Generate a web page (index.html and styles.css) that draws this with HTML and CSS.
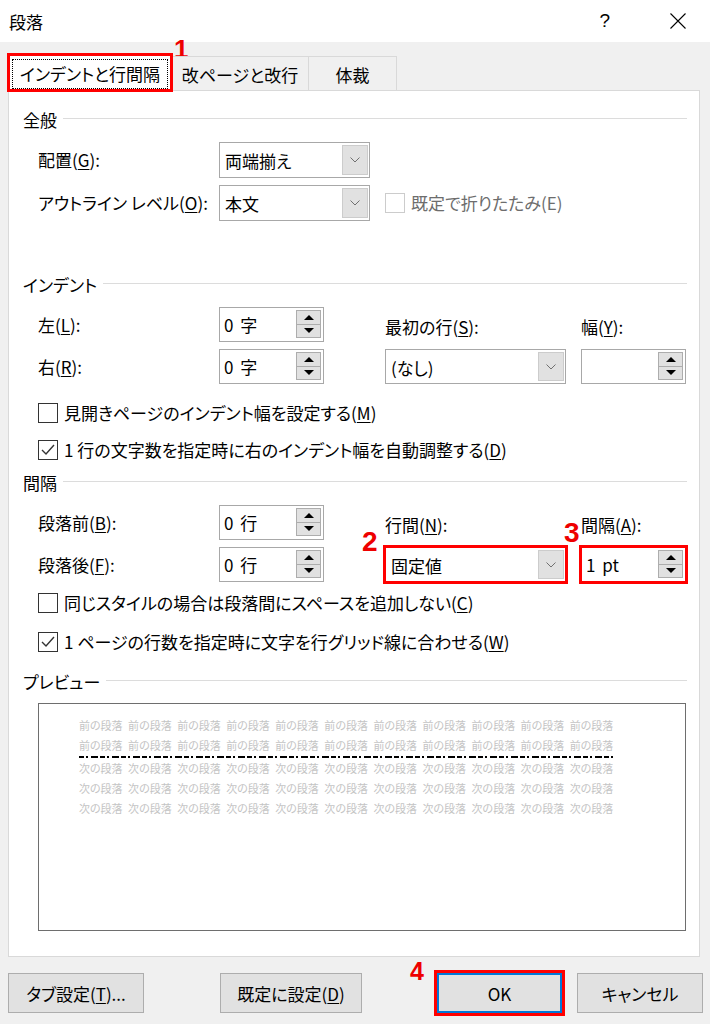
FILE: index.html
```html
<!DOCTYPE html>
<html lang="ja">
<head>
    <meta charset="UTF-8">
    <title>段落</title>
    <link rel="stylesheet" href="styles.css">
</head>
<body>
<div class="dialog">

    <div class="titlebar">
        <span class="title">段落</span>
        <span class="help">?</span>
        <svg class="close" width="16" height="16" viewBox="0 0 16 16">
            <path d="M0.5 0.5 L15.5 15.5 M15.5 0.5 L0.5 15.5" stroke="#000" stroke-width="1.1" fill="none"/>
        </svg>
    </div>

    <div class="tabs">
        <div class="tab tab-indent active">
            <span class="focus">インデントと行間隔</span>
            <span class="redbox"></span>
        </div>
        <div class="tab tab-page">改ページと改行</div>
        <div class="tab tab-style">体裁</div>
    </div>

    <div class="panel">

        <h3 class="group-title first">全般</h3>
        <div class="form-grid general">
            <span class="label c1">配置(<u>G</u>):</span>
            <div class="select narrow">
                <span class="value">両端揃え</span>
                <span class="drop"><svg width="10" height="6" viewBox="0 0 10 6"><path d="M0.5 0.5 L5 5 L9.5 0.5" stroke="#707070" fill="none"/></svg></span>
            </div>
            <span class="label c1">アウトライン レベル(<u>O</u>):</span>
            <div class="select narrow">
                <span class="value">本文</span>
                <span class="drop"><svg width="10" height="6" viewBox="0 0 10 6"><path d="M0.5 0.5 L5 5 L9.5 0.5" stroke="#707070" fill="none"/></svg></span>
            </div>
            <div class="check disabled c3">
                <span class="box"></span>
                <span>既定で折りたたみ(E)</span>
            </div>
        </div>

        <h3 class="group-title indent-title">インデント</h3>
        <div class="form-grid">
            <span class="label c1">左(<u>L</u>):</span>
            <div class="spin">
                <span class="value">0 字</span>
                <span class="spin-btns">
                    <span class="arrow"><svg width="10" height="5" viewBox="0 0 10 5"><path d="M0 5 L5 0 L10 5 Z" fill="#000"/></svg></span>
                    <span class="arrow"><svg width="10" height="5" viewBox="0 0 10 5"><path d="M0 0 L10 0 L5 5 Z" fill="#000"/></svg></span>
                </span>
            </div>
            <span class="label c3 low">最初の行(<u>S</u>):</span>
            <span class="label c5 low">幅(<u>Y</u>):</span>

            <span class="label c1">右(<u>R</u>):</span>
            <div class="spin">
                <span class="value">0 字</span>
                <span class="spin-btns">
                    <span class="arrow"><svg width="10" height="5" viewBox="0 0 10 5"><path d="M0 5 L5 0 L10 5 Z" fill="#000"/></svg></span>
                    <span class="arrow"><svg width="10" height="5" viewBox="0 0 10 5"><path d="M0 0 L10 0 L5 5 Z" fill="#000"/></svg></span>
                </span>
            </div>
            <div class="select wide c3">
                <span class="value">(なし)</span>
                <span class="drop"><svg width="10" height="6" viewBox="0 0 10 6"><path d="M0.5 0.5 L5 5 L9.5 0.5" stroke="#707070" fill="none"/></svg></span>
            </div>
            <div class="spin c5">
                <span class="value"></span>
                <span class="spin-btns">
                    <span class="arrow"><svg width="10" height="5" viewBox="0 0 10 5"><path d="M0 5 L5 0 L10 5 Z" fill="#000"/></svg></span>
                    <span class="arrow"><svg width="10" height="5" viewBox="0 0 10 5"><path d="M0 0 L10 0 L5 5 Z" fill="#000"/></svg></span>
                </span>
            </div>
        </div>

        <div class="checks indent-checks">
            <div class="check">
                <span class="box"></span>
                <span>見開きページのインデント幅を設定する(<u>M</u>)</span>
            </div>
            <div class="check">
                <span class="box"><svg width="18" height="18" viewBox="0 0 18 18"><path d="M3 9 L7 13 L15 4" stroke="#333" stroke-width="1.4" fill="none"/></svg></span>
                <span>1 行の文字数を指定時に右のインデント幅を自動調整する(<u>D</u>)</span>
            </div>
        </div>

        <h3 class="group-title space-title">間隔</h3>
        <div class="form-grid">
            <span class="label c1">段落前(<u>B</u>):</span>
            <div class="spin">
                <span class="value">0 行</span>
                <span class="spin-btns">
                    <span class="arrow"><svg width="10" height="5" viewBox="0 0 10 5"><path d="M0 5 L5 0 L10 5 Z" fill="#000"/></svg></span>
                    <span class="arrow"><svg width="10" height="5" viewBox="0 0 10 5"><path d="M0 0 L10 0 L5 5 Z" fill="#000"/></svg></span>
                </span>
            </div>
            <span class="label c3 low">行間(<u>N</u>):</span>
            <span class="label c5 low">間隔(<u>A</u>):</span>

            <span class="label c1">段落後(<u>F</u>):</span>
            <div class="spin">
                <span class="value">0 行</span>
                <span class="spin-btns">
                    <span class="arrow"><svg width="10" height="5" viewBox="0 0 10 5"><path d="M0 5 L5 0 L10 5 Z" fill="#000"/></svg></span>
                    <span class="arrow"><svg width="10" height="5" viewBox="0 0 10 5"><path d="M0 0 L10 0 L5 5 Z" fill="#000"/></svg></span>
                </span>
            </div>
            <div class="select wide c3 hl">
                <span class="value">固定値</span>
                <span class="drop"><svg width="10" height="6" viewBox="0 0 10 6"><path d="M0.5 0.5 L5 5 L9.5 0.5" stroke="#707070" fill="none"/></svg></span>
            </div>
            <div class="spin c5 hl">
                <span class="value">1 pt</span>
                <span class="spin-btns">
                    <span class="arrow"><svg width="10" height="5" viewBox="0 0 10 5"><path d="M0 5 L5 0 L10 5 Z" fill="#000"/></svg></span>
                    <span class="arrow"><svg width="10" height="5" viewBox="0 0 10 5"><path d="M0 0 L10 0 L5 5 Z" fill="#000"/></svg></span>
                </span>
            </div>
        </div>

        <div class="checks space-checks">
            <div class="check">
                <span class="box"></span>
                <span>同じスタイルの場合は段落間にスペースを追加しない(<u>C</u>)</span>
            </div>
            <div class="check">
                <span class="box"><svg width="18" height="18" viewBox="0 0 18 18"><path d="M3 9 L7 13 L15 4" stroke="#333" stroke-width="1.4" fill="none"/></svg></span>
                <span>1 ページの行数を指定時に文字を行グリッド線に合わせる(<u>W</u>)</span>
            </div>
        </div>

        <h3 class="group-title preview-title">プレビュー</h3>
        <div class="preview">
            <p class="pv">前の段落 前の段落 前の段落 前の段落 前の段落 前の段落 前の段落 前の段落 前の段落 前の段落 前の段落</p>
            <p class="pv">前の段落 前の段落 前の段落 前の段落 前の段落 前の段落 前の段落 前の段落 前の段落 前の段落 前の段落</p>
            <div class="squash"></div>
            <p class="pv">次の段落 次の段落 次の段落 次の段落 次の段落 次の段落 次の段落 次の段落 次の段落 次の段落 次の段落</p>
            <p class="pv">次の段落 次の段落 次の段落 次の段落 次の段落 次の段落 次の段落 次の段落 次の段落 次の段落 次の段落</p>
            <p class="pv">次の段落 次の段落 次の段落 次の段落 次の段落 次の段落 次の段落 次の段落 次の段落 次の段落 次の段落</p>
        </div>
    </div>

    <div class="actions">
        <button class="btn btn-tabs">タブ設定(<u>T</u>)...</button>
        <button class="btn btn-default">既定に設定(<u>D</u>)</button>
        <button class="btn btn-ok">OK</button>
        <button class="btn btn-cancel">キャンセル</button>
    </div>

    <span class="num n1">1</span>
    <span class="num n2">2</span>
    <span class="num n3">3</span>
    <span class="num n4">4</span>
</div>
</body>
</html>
```

FILE: styles.css
```css
body {
    margin: 0;
    background-color: #f0f0f0;
    font-family: "Noto Sans CJK JP", "Noto Sans", sans-serif;
    font-feature-settings: "palt";
    color: #000;
}

.dialog {
    position: relative;
    width: 710px;
    height: 1024px;
    overflow: hidden;
    background-color: #f0f0f0;
}

/* title bar */
.titlebar {
    height: 42px;
    background-color: #fff;
    display: flex;
    align-items: center;
    padding-left: 9px;
    font-size: 17px;
}

.help {
    margin-left: auto;
    font-family: "Liberation Sans", sans-serif;
    font-size: 19px;
}

.close {
    margin: 0 24px 0 60px;
}

/* tabs */
.tabs {
    display: flex;
    align-items: flex-end;
    height: 34px;
    margin-top: 14px;
    padding-left: 8px;
    position: relative;
    z-index: 1;
}

.tab {
    box-sizing: border-box;
    height: 34px;
    border: 1px solid #d9d9d9;
    border-bottom: none;
    background-color: #f0f0f0;
    display: flex;
    align-items: center;
    justify-content: center;
    font-size: 17px;
}

.tab + .tab {
    margin-left: -1px;
}

.tab-indent {
    width: 164px;
}

.tab-page {
    width: 138px;
    padding-top: 2px;
}

.tab-style {
    width: 89px;
    padding-top: 2px;
}

.tab.active {
    position: relative;
    height: 36px;
    margin-bottom: -1px;
    background-color: #fff;
}

.focus {
    box-sizing: border-box;
    width: 156px;
    height: 30px;
    border: 1px dotted #000;
    display: flex;
    align-items: center;
    justify-content: center;
}

.redbox {
    position: absolute;
    left: -2px;
    top: -3px;
    right: -2px;
    bottom: -1px;
    border: 3px solid #f00;
}

/* panel */
.panel {
    box-sizing: border-box;
    width: 692px;
    height: 867px;
    margin-left: 8px;
    padding: 0 12px 0 14px;
    border: 1px solid #d9d9d9;
    background-color: #fff;
}

.group-title {
    display: flex;
    align-items: center;
    margin: 0;
    font-size: 17px;
    font-weight: normal;
    line-height: 24px;
}

.group-title::after {
    content: "";
    flex: 1;
    height: 1px;
    margin: 0 0 4px 6px;
    background-color: #dcdcdc;
}

.group-title.first {
    margin-top: 17px;
}

.indent-title {
    margin-top: 52px;
}

.space-title {
    margin-top: 9px;
}

.preview-title {
    margin-top: 16px;
}

.form-grid {
    display: grid;
    grid-template-columns: 181px 166px 181px 15px 106px;
    grid-template-rows: 35px 35px;
    row-gap: 7px;
    align-items: center;
    margin: 10px 0 0 15px;
    font-size: 17px;
}

.form-grid.general {
    grid-template-rows: 36px 36px;
}

.c1 {
    grid-column: 1;
}

.c3 {
    grid-column: 3;
}

.c5 {
    grid-column: 5;
}

.label {
    line-height: 24px;
    white-space: nowrap;
}

.label.low {
    padding-top: 5px;
}

u {
    text-underline-offset: 2px;
}

/* dropdowns */
.select {
    box-sizing: border-box;
    height: 100%;
    display: flex;
    align-items: center;
    padding-left: 5px;
    border: 1px solid #a8a8a8;
    background-color: #fff;
}

.select.narrow {
    width: 151px;
}

.select.wide {
    width: 181px;
}

.select .value {
    line-height: 24px;
    padding-top: 2px;
}

.drop {
    box-sizing: border-box;
    width: 26px;
    height: calc(100% - 4px);
    margin: 0 1px 0 auto;
    display: flex;
    align-items: center;
    justify-content: center;
    background-color: #e1e1e1;
    border: 1px solid #cccccc;
}

/* spin boxes */
.spin {
    box-sizing: border-box;
    width: 105px;
    height: 100%;
    display: flex;
    align-items: center;
    padding-left: 4px;
    border: 1px solid #a8a8a8;
    background-color: #fff;
}

.spin .value {
    line-height: 24px;
    word-spacing: 3px;
}

.spin-btns {
    align-self: stretch;
    width: 25px;
    margin: 2px 2px 3px auto;
    display: flex;
    flex-direction: column;
}

.arrow {
    flex: 1;
    display: flex;
    align-items: center;
    justify-content: center;
    background-color: #e1e1e1;
    border: 1px solid #adadad;
}

.arrow + .arrow {
    border-top: none;
}

.hl {
    outline: 3px solid #f00;
    outline-offset: -1px;
}

/* checkboxes */
.check {
    display: flex;
    align-items: center;
    gap: 6px;
    height: 24px;
    font-size: 17px;
    line-height: 24px;
    white-space: nowrap;
}

.box {
    box-sizing: border-box;
    width: 20px;
    height: 20px;
    border: 1px solid #333;
    background-color: #fff;
    display: flex;
    align-items: center;
    justify-content: center;
}

.check.disabled {
    color: #6d6d6d;
}

.check.disabled .box {
    border-color: #cccccc;
}

.checks {
    margin-left: 15px;
}

.indent-checks {
    margin-top: 17px;
}

.indent-checks .check + .check {
    margin-top: 13px;
}

.space-checks {
    margin-top: 9px;
}

.space-checks .check + .check {
    margin-top: 15px;
}

/* preview */
.preview {
    box-sizing: border-box;
    width: 648px;
    height: 228px;
    margin: 9px 0 0 15px;
    padding: 11px 0 0 40px;
    border: 1px solid #6e6e6e;
}

.pv {
    margin: 0;
    font-size: 11px;
    line-height: 20px;
    color: #c4c4c4;
    word-spacing: 3px;
    white-space: nowrap;
}

.squash {
    width: 535px;
    height: 2px;
    margin: 1px 0 0;
    background: repeating-linear-gradient(90deg, #000 0 5px, transparent 5px 7px, #000 7px 9px, transparent 9px 12px, #000 12px 19px, transparent 19px 21px);
}

/* buttons */
.actions {
    display: flex;
    margin-top: 16px;
    padding-left: 8px;
}

.btn {
    box-sizing: border-box;
    height: 40px;
    padding: 0;
    border: 1px solid #adadad;
    background-color: #e1e1e1;
    font-family: inherit;
    font-feature-settings: "palt";
    font-size: 17px;
    color: #000;
}

.btn-tabs {
    width: 136px;
}

.btn-default {
    width: 142px;
    margin-left: 76px;
}

.btn-ok {
    width: 125px;
    margin-left: 75px;
    border: 2px solid #0078d7;
    outline: 3px solid #f00;
}

.btn-cancel {
    width: 126px;
    margin-left: 15px;
}

/* annotation numbers */
.num {
    position: absolute;
    font-family: "Liberation Sans", sans-serif;
    font-weight: 700;
    color: #ee0000;
    line-height: 1;
}

.n1 {
    left: 174px;
    top: 36px;
    font-size: 26px;
}

.n2 {
    left: 362px;
    top: 528px;
    font-size: 28px;
}

.n3 {
    left: 564px;
    top: 519px;
    font-size: 28px;
}

.n4 {
    left: 410px;
    top: 959px;
    font-size: 25px;
}
```
